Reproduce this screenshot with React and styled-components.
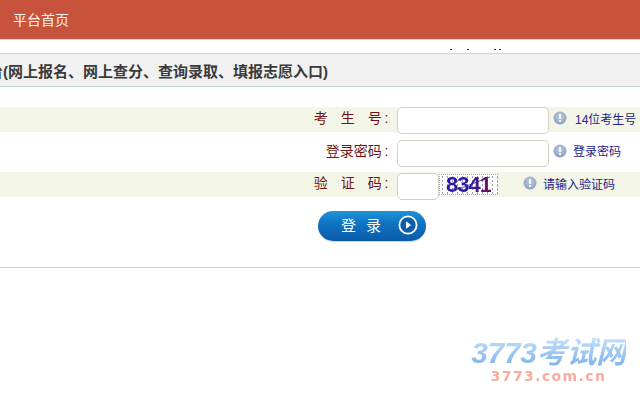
import React from "react";
import styled, { createGlobalStyle } from "styled-components";

const Global = createGlobalStyle`
  html, body { margin: 0; padding: 0; background: #fff; }
  body { font-family: "Liberation Sans", "Noto Sans CJK SC", sans-serif; }
`;
const Page = styled.div`
  position: relative; width: 640px; height: 401px; overflow: hidden; background: #fff;
`;
const Header = styled.header`
  display: flex; align-items: center; height: 38px; padding: 0 0 1px 13px; box-sizing: content-box;
  background: #c8533d; border-bottom: 1px solid #f6d9cf;
  color: #fdf3ef; font-size: 14px;
`;
const Peek = styled.svg`
  position: absolute; left: 445px; top: 47px; width: 60px; height: 6px;
`;
const Panel = styled.section`
  margin-top: 13px; border-top: 1px solid #cfd4d4; border-bottom: 1px solid #cfcfcf; height: 213px;
`;
const TitleBar = styled.h2`
  margin: 0; height: 32px; display: flex; align-items: center; white-space: nowrap; overflow: hidden;
  background: #f1f1f1; border-bottom: 1px solid #c9d6d6;
  font-size: 15px; font-weight: bold; color: #3a3a3a;
`;
const TitleText = styled.span` margin-left: -12px; `;
const Form = styled.div`
  display: flex; flex-direction: column; gap: 7.5px; padding-top: 20px;
`;
const Row = styled.div`
  display: flex; height: 25px; align-items: flex-start;
  background: ${(p) => (p.$band ? "#f3f5e7" : "transparent")};
`;
const Label = styled.label`
  width: 393px; flex: none; box-sizing: border-box; padding-right: 4.5px; height: 25px; line-height: 23px;
  text-align: right; font-size: 14px; color: #701414; white-space: pre; word-spacing: 9.2px;
`;
const Input = styled.input`
  box-sizing: border-box; margin: 0 0 0 4px; height: 27px; width: ${(p) => p.$w}px; flex: none;
  background: #fff; border: 1px solid #d4d0c4; border-radius: 5px; outline: none; padding: 0;
  ${(p) => p.$short && "margin-top: 1px;"}
`;
const Captcha = styled.div`
  position: relative; width: 59px; height: 21px; margin-top: 2px; flex: none; box-sizing: border-box;
  border: 1px dotted #aaa;
  background: #fff radial-gradient(#8a93b8 0.6px, transparent 0.8px) 0 0 / 5px 4px;
  display: flex; align-items: center; justify-content: center;
  font-family: "Liberation Sans", sans-serif; font-weight: bold; font-size: 22px; line-height: 1; letter-spacing: -1px;
`;
const CaptchaDigits = styled.span`
  background: linear-gradient(90deg, #2a1aa0 0%, #2a1aa0 55%, #7a1050 100%);
  -webkit-background-clip: text; background-clip: text; color: transparent;
`;
const CaptchaLine = styled.svg`
  position: absolute; left: 0; top: 0; width: 57px; height: 19px;
`;
const Hint = styled.div`
  display: flex; align-items: center; height: 25px; margin-left: ${(p) => p.$ml}px; flex: none;
  font-size: 12px; color: #24248c; white-space: nowrap;
`;
const HintIcon = styled.svg` width: 14px; height: 14px; margin-right: ${(p) => p.$mr}px; flex: none; margin-top: -3px; `;
const HintText = styled.span` margin-top: -3px; `;
const ButtonRow = styled.div`
  display: flex; padding: 6px 0 0 318px;
`;
const LoginButton = styled.button`
  display: flex; align-items: center; width: 108px; height: 30px; padding: 0 8px 2px 23px; border: 0; border-radius: 15px;
  background: linear-gradient(180deg, #1f94d8 0%, #0f74c2 40%, #0a5aa8 100%);
  box-shadow: 0 1px 1px #c4d4e4; color: #fff; font-size: 15px; font-family: inherit; letter-spacing: 10px; white-space: nowrap;
  justify-content: space-between;
`;
const ButtonIcon = styled.svg` width: 20px; height: 20px; flex: none; `;
const Watermark = styled.div`
  position: absolute; left: 471px; top: 336px; width: 155px; display: flex; flex-direction: column; align-items: center; opacity: .75;
`;
const WatermarkMain = styled.div`
  font-family: "Liberation Sans", "Noto Sans CJK SC", sans-serif; font-style: italic; font-weight: bold; font-size: 30px; line-height: 34px;
  white-space: nowrap; letter-spacing: -.3px;
  background: linear-gradient(180deg, #a9d4f7 10%, #5f9fe6 80%);
  -webkit-background-clip: text; background-clip: text; color: transparent;
`;
const WatermarkSub = styled.div`
  font-family: "DejaVu Sans", sans-serif; font-size: 14px; line-height: 15px; letter-spacing: 1.4px; color: #f68f7d; font-weight: bold;
  margin-top: -1px;
`;

const Info = ({ mr }) => (
  <HintIcon $mr={mr} viewBox="0 0 14 14">
    <defs>
      <radialGradient id="ig" cx="50%" cy="40%" r="60%">
        <stop offset="0" stopColor="#c3cee0" />
        <stop offset="1" stopColor="#8a9dc2" />
      </radialGradient>
    </defs>
    <circle cx="7" cy="7" r="6.5" fill="url(#ig)" />
    <rect x="6" y="3" width="2" height="5" fill="#f4f6fa" />
    <rect x="6" y="9" width="2" height="2" fill="#f4f6fa" />
  </HintIcon>
);

export default function App() {
  return (
    <Page>
      <Global />
      <Header>平台首页</Header>
      <Peek viewBox="0 0 60 6">
        <g fill="#333">
          <rect x="5" y="2" width="2" height="1" />
          <rect x="22" y="2" width="2" height="1" />
          <rect x="49" y="2" width="2" height="1" />
          <rect x="54" y="2" width="2" height="1" />
        </g>
      </Peek>
      <Panel>
        <TitleBar><TitleText>台(网上报名、网上查分、查询录取、填报志愿入口)</TitleText></TitleBar>
        <Form>
          <Row $band>
            <Label>{"考 生 号\u2009:"}</Label>
            <Input $w={152} />
            <Hint $ml={4}><Info mr={8} /><HintText>14位考生号</HintText></Hint>
          </Row>
          <Row>
            <Label>{"登录密码\u2009:"}</Label>
            <Input $w={152} />
            <Hint $ml={4}><Info mr={6} /><HintText>登录密码</HintText></Hint>
          </Row>
          <Row $band>
            <Label>{"验 证 码\u2009:"}</Label>
            <Input $w={42} $short />
            <Captcha>
              <CaptchaDigits>8341</CaptchaDigits>
              <CaptchaLine viewBox="0 0 57 19">
                <path d="M8 15 L24 12 L50 2" stroke="#3a2a80" strokeWidth=".8" fill="none" />
              </CaptchaLine>
            </Captcha>
            <Hint $ml={25}><Info mr={6} /><HintText>请输入验证码</HintText></Hint>
          </Row>
          <ButtonRow>
            <LoginButton>
              <span>登录</span>
              <ButtonIcon viewBox="0 0 20 20">
                <circle cx="10" cy="10" r="8.6" fill="#0d5ea8" stroke="#fff" strokeWidth="1.8" />
                <path d="M8 6.2 L13.2 10 L8 13.8 Z" fill="#fff" />
              </ButtonIcon>
            </LoginButton>
          </ButtonRow>
        </Form>
      </Panel>
      <Watermark>
        <WatermarkMain>3773考试网</WatermarkMain>
        <WatermarkSub>3773.com.cn</WatermarkSub>
      </Watermark>
    </Page>
  );
}
